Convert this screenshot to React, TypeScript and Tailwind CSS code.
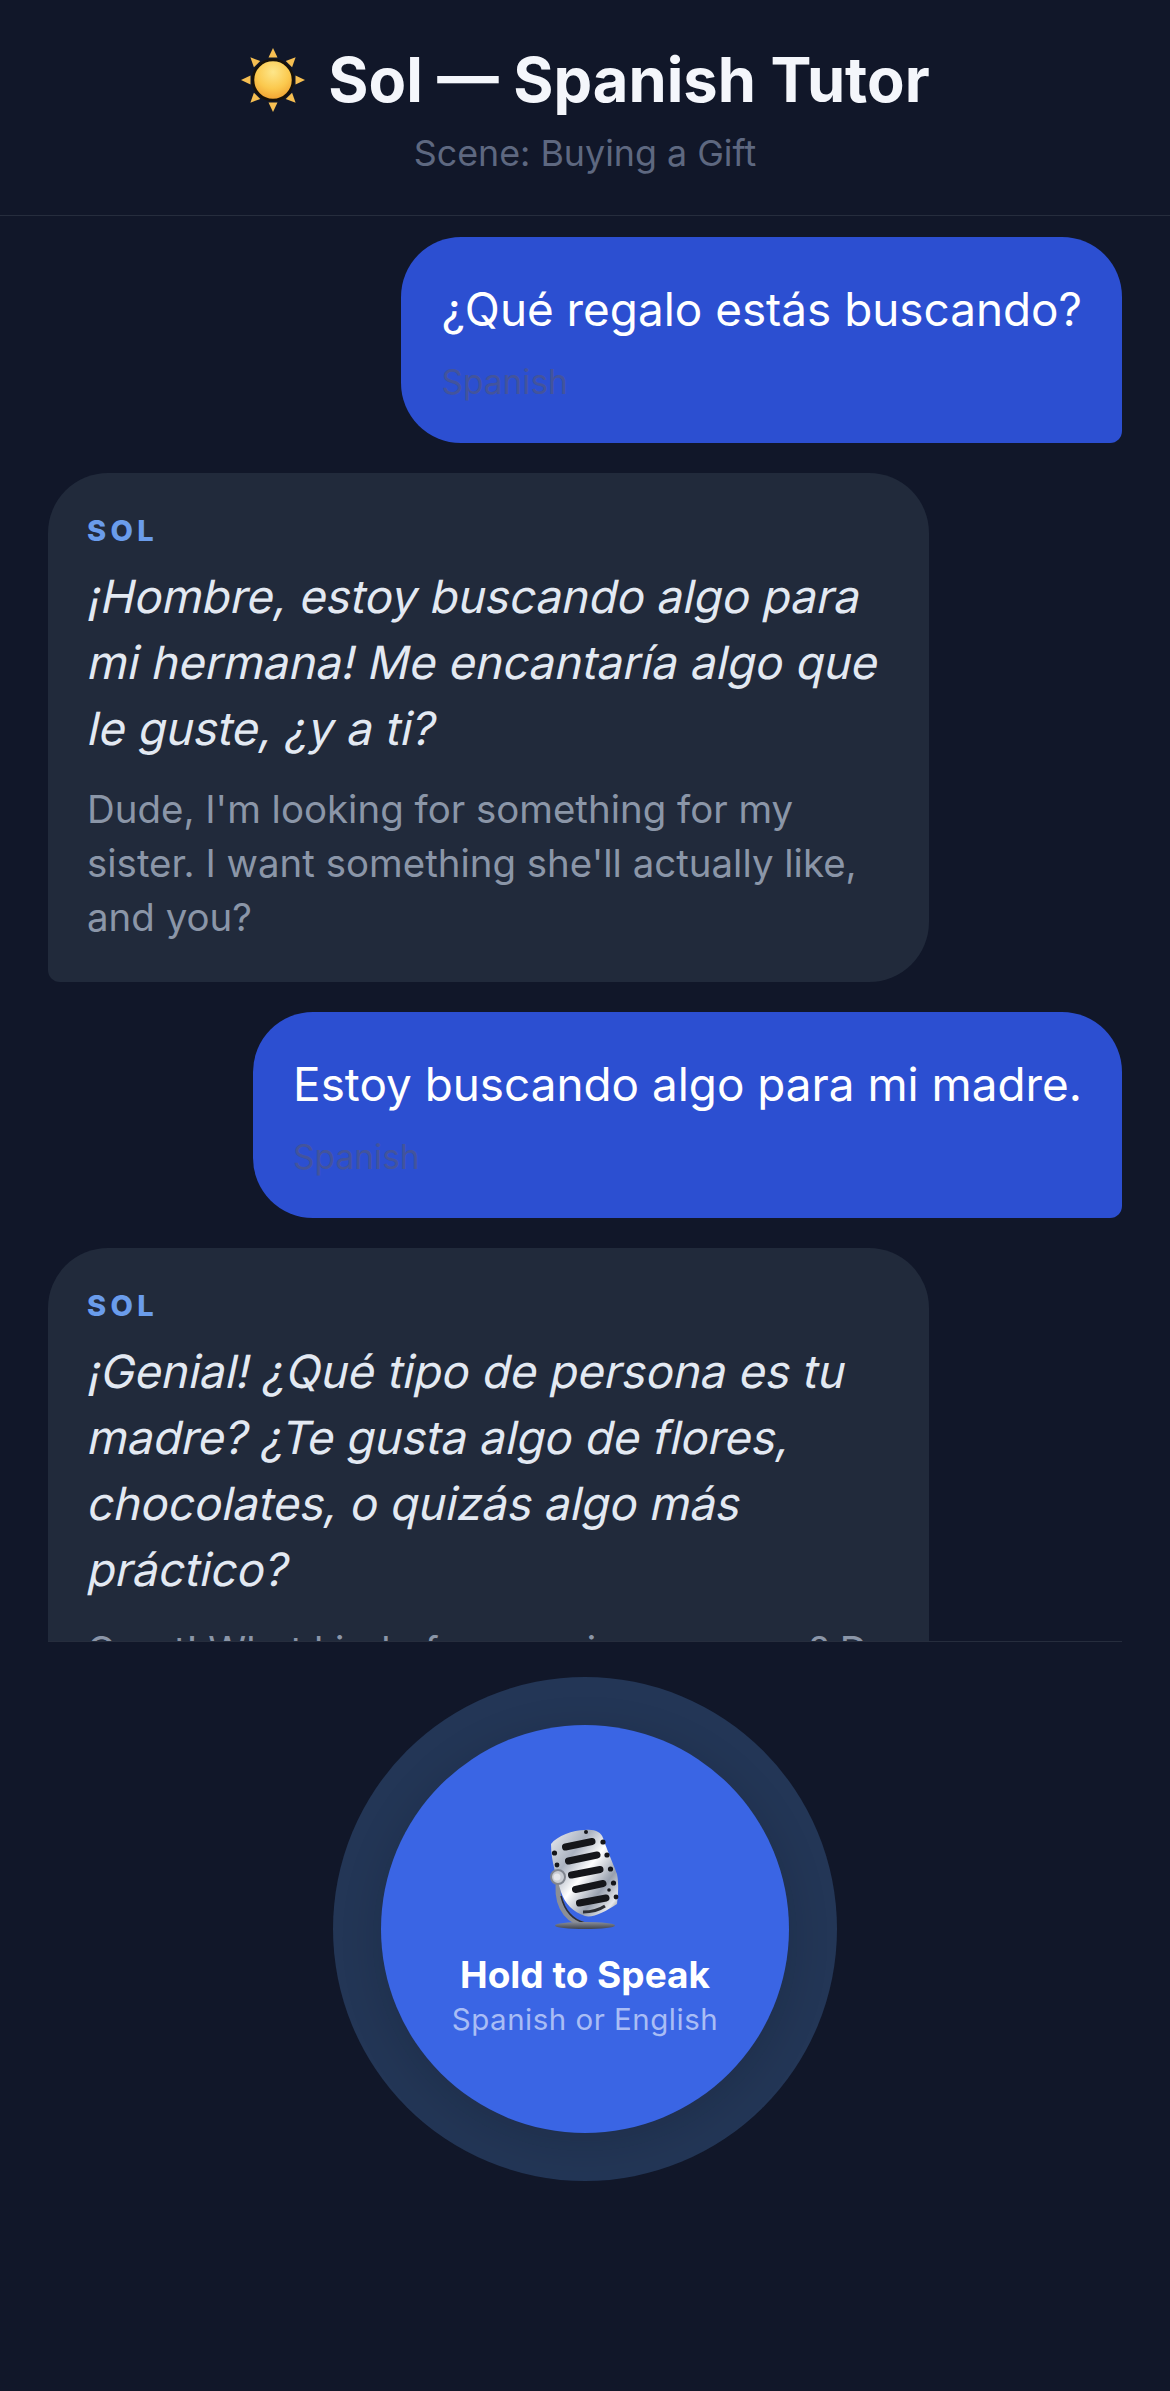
import React from 'react';

const FONT = 'font-["Inter","Noto_Sans",sans-serif]';

function SunIcon() {
    const rays = [0, 45, 90, 135, 180, 225, 270, 315];
    return (
        <svg width="66" height="66" viewBox="0 0 66 66" className="shrink-0">
            <defs>
                <radialGradient id="sunFill" cx="50%" cy="30%" r="75%">
                    <stop offset="0%" stopColor="#fde68a" />
                    <stop offset="55%" stopColor="#fbc94e" />
                    <stop offset="100%" stopColor="#ee9a2c" />
                </radialGradient>
            </defs>
            {rays.map((r) => (
                <polygon key={r} points="33,1 37.5,10.5 28.5,10.5" fill="#f6bf52" transform={`rotate(${r} 33 33)`} />
            ))}
            <circle cx="33" cy="33" r="20" fill="url(#sunFill)" stroke="#17120a" strokeWidth="2.5" />
        </svg>
    );
}

function MicIcon() {
    const stripes = [
        [64.5, 47, 91, 41.5],
        [67.5, 61, 96, 55],
        [70.5, 75, 99, 69.5],
        [74.5, 89.5, 102, 83.5],
        [78.5, 103, 105, 98],
    ];
    const dots = [
        [85, 32, 2],
        [102, 42, 2.6],
        [106, 55, 2.6],
        [109.5, 69, 2.6],
        [112.5, 83, 2.6],
        [115, 97, 2.4],
        [108, 90, 1.8],
        [53.5, 53, 2.6],
        [56, 65, 2.4],
    ];
    return (
        <svg width="72" height="104" viewBox="48 28 72 104" className="shrink-0">
            <defs>
                <linearGradient id="micBody" x1="0" y1="0" x2="1" y2="1">
                    <stop offset="0%" stopColor="#eceef2" />
                    <stop offset="30%" stopColor="#aab2c0" />
                    <stop offset="50%" stopColor="#ffffff" />
                    <stop offset="72%" stopColor="#98a0ae" />
                    <stop offset="88%" stopColor="#e6e8ec" />
                    <stop offset="100%" stopColor="#565a64" />
                </linearGradient>
                <linearGradient id="micBase" x1="0" y1="0" x2="0" y2="1">
                    <stop offset="0%" stopColor="#8a8f99" />
                    <stop offset="100%" stopColor="#3f434c" />
                </linearGradient>
            </defs>
            <path d="M58 78 C54 100 62 120 82 124" fill="none" stroke="#8c8f96" strokeWidth="5" />
            <path d="M60 96 C64 112 72 120 84 123" fill="none" stroke="#2c2e34" strokeWidth="1.5" />
            <path
                d="M50 44 C56 36 72 30 84 30 C94 29 100 32 102 38 C106 50 114 68 116 74 C118 84 117 96 116 104 C104 112 92 118 84 116 C72 112 64 104 60 92 C56 78 50 62 50 44 Z"
                fill="url(#micBody)"
            />
            {stripes.map(([x1, y1, x2, y2], i) => (
                <line key={i} x1={x1} y1={y1} x2={x2} y2={y2} stroke="#15161a" strokeWidth="7" strokeLinecap="round" />
            ))}
            {dots.map(([cx, cy, r], i) => (
                <circle key={i} cx={cx} cy={cy} r={r} fill="#15161a" />
            ))}
            <path d="M82 112 C90 112 98 110 104 106" fill="none" stroke="#2c2e34" strokeWidth="3" />
            <circle cx="57" cy="77" r="7" fill="#c8ccd3" stroke="#80858f" strokeWidth="2" />
            <circle cx="56" cy="77" r="3.5" fill="#e5e7eb" />
            <ellipse cx="84" cy="125.5" rx="30" ry="3.6" fill="url(#micBase)" />
        </svg>
    );
}

function UserBubble({ text }: { text: string }) {
    return (
        <div className="flex justify-end">
            <div className="rounded-[60px] rounded-br-[12px] bg-[#2c4fd1] px-10 pt-[43px] pb-[39px]">
                <p className="text-[45.85px] leading-[60px] text-white">{text}</p>
                <p className="mt-[20px] text-[33.5px] leading-[44px] text-[#43549c]">Spanish</p>
            </div>
        </div>
    );
}

// the reference's italic is a slanted regular face, so each line gets its own skew
function SolBubble({ lines, english }: { lines: string[]; english: string }) {
    return (
        <div className="w-[881px] rounded-[60px] rounded-bl-[12px] bg-[#212a3b] pt-10 pr-[30px] pb-[38px] pl-[39px]">
            <p className="text-[29px] leading-[36px] font-extrabold tracking-[4.4px] text-[#6a9ceb]">SOL</p>
            <div className="mt-[15px] -ml-[2px]">
                {lines.map((line) => (
                    <p key={line} className="origin-[0_80%] -skew-x-12 text-[45.8px] leading-[66px] whitespace-nowrap text-[#e3e9f2]">
                        {line}
                    </p>
                ))}
            </div>
            <p className="mt-[20px] text-[38.45px] leading-[54px] text-[#8b96a8]">{english}</p>
        </div>
    );
}

export default function App() {
    return (
        <div className={`flex h-[2391px] w-full flex-col overflow-hidden bg-[#111729] ${FONT}`}>
            <header className="flex h-[216px] shrink-0 flex-col items-center border-b border-[#262d3d] pt-[44px]">
                <div className="flex items-center gap-[22px]">
                    <SunIcon />
                    <h1 className="text-[61.4px] leading-[72px] font-bold text-[#f4f6fb]">Sol — Spanish Tutor</h1>
                </div>
                <p className="mt-[15px] text-[35.8px] leading-[44px] text-[#5e6880]">Scene: Buying a Gift</p>
            </header>

            <main className="h-[1425px] shrink-0 overflow-hidden px-12 pt-[21px]">
                <div className="flex flex-col gap-[30px]">
                    <UserBubble text="¿Qué regalo estás buscando?" />
                    <SolBubble
                        lines={['¡Hombre, estoy buscando algo para', 'mi hermana! Me encantaría algo que', 'le guste, ¿y a ti?']}
                        english="Dude, I'm looking for something for my sister. I want something she'll actually like, and you?"
                    />
                    <UserBubble text="Estoy buscando algo para mi madre." />
                    <SolBubble
                        lines={['¡Genial! ¿Qué tipo de persona es tu', 'madre? ¿Te gusta algo de flores,', 'chocolates, o quizás algo más', 'práctico?']}
                        english="Great! What kind of person is your mom? Do you think she'd like flowers?"
                    />
                </div>
            </main>

            <footer className="mx-12 flex flex-1 justify-center border-t border-[#262d3d] pt-[83px]">
                <button
                    type="button"
                    className="flex h-[408px] w-[408px] flex-col items-center rounded-full bg-[#3a65e4] pt-[103px] shadow-[0_10px_40px_rgba(10,15,30,0.18),0_0_0_48px_#233656]"
                >
                    <MicIcon />
                    <span className="mt-[21px] text-[37px] leading-[44px] font-bold text-white">Hold to Speak</span>
                    <span className="mt-[2px] text-[29.5px] leading-[40px] tracking-[0.5px] text-[#a9bdf5]">Spanish or English</span>
                </button>
            </footer>
        </div>
    );
}
